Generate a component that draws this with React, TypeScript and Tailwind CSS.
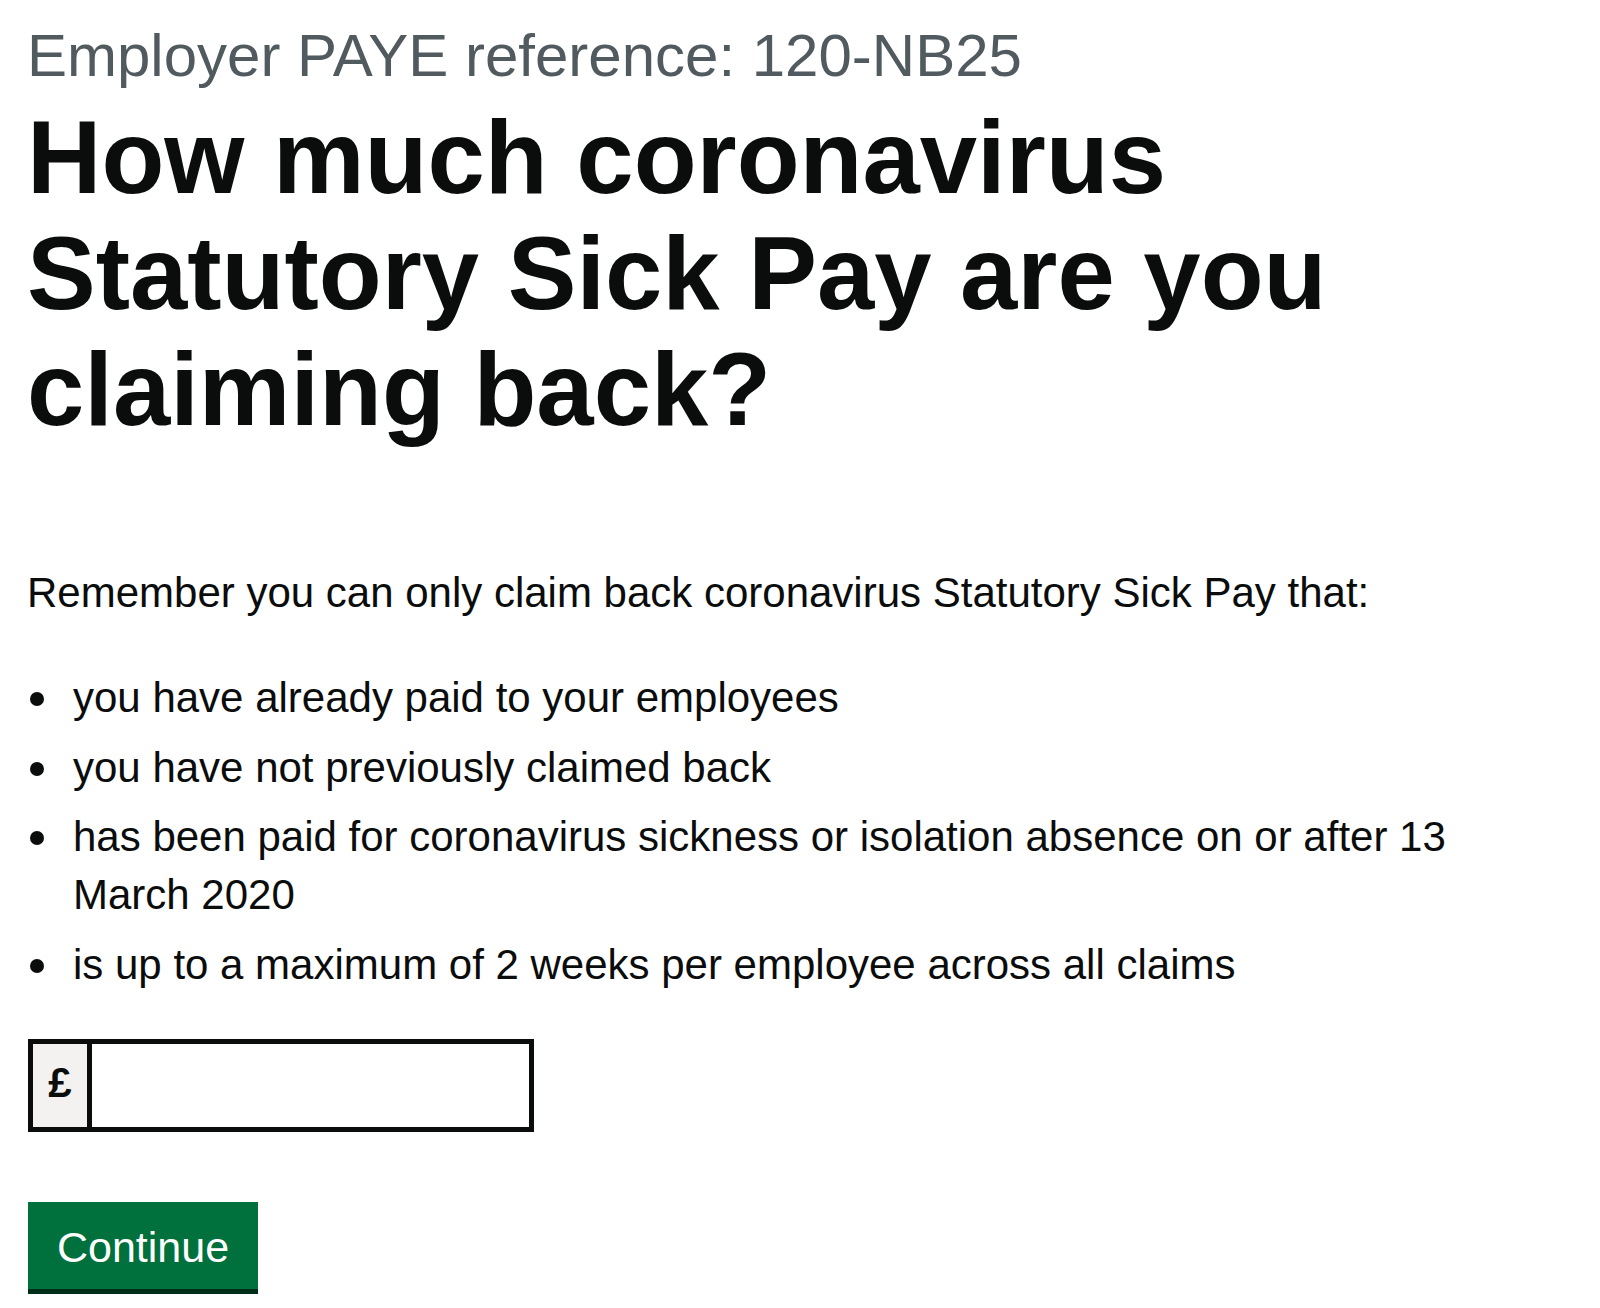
import React from "react";

const items: React.ReactNode[] = [
  "you have already paid to your employees",
  "you have not previously claimed back",
  <>
    has been paid for coronavirus sickness or isolation absence on or after 13
    <br />
    March 2020
  </>,
  "is up to a maximum of 2 weeks per employee across all claims",
];

export default function App() {
  return (
    <div className="min-h-screen bg-white px-[27px] pt-[21px] font-['Liberation_Sans',Arial,sans-serif] text-[#0b0c0c]">
      <span className="mb-[9px] block text-[60px] leading-[70px] text-[#505a5f]">
        Employer PAYE reference: 120-NB25
      </span>
      <h1 className="mb-[116px] text-[103px] font-bold leading-[116px]">
        How much coronavirus
        <br />
        Statutory Sick Pay are you
        <br />
        claiming back?
      </h1>
      <p className="mb-[47px] text-[42px] leading-[58px]">
        Remember you can only claim back coronavirus Statutory Sick Pay that:
      </p>
      <ul className="mb-[45.5px] flex flex-col gap-[11.5px] text-[42px] leading-[58px]">
        {items.map((it, i) => (
          <li key={i} className="flex">
            <span className="w-[46px] shrink-0">
              <span className="ml-[3px] mt-[23px] block h-[14px] w-[14px] rounded-full bg-[#0b0c0c]" />
            </span>
            <span className="whitespace-nowrap">{it}</span>
          </li>
        ))}
      </ul>
      <div className="ml-[1px] flex h-[93px]">
        <div className="flex h-[93px] w-[59px] items-center justify-center border-[5px] border-r-0 border-[#0b0c0c] bg-[#f3f2f1] pb-[6px] text-[42px] font-bold">
          £
        </div>
        <input
          type="text"
          aria-label="Amount"
          className="h-[93px] w-[447px] border-[5px] border-[#0b0c0c] bg-white px-[10px] text-[42px] outline-none"
        />
      </div>
      <button
        type="button"
        className="ml-[1px] mt-[70px] flex h-[87px] w-[230px] items-center justify-center bg-[#00703c] pt-[4px] text-[43px] text-white shadow-[0_5px_0_#002d18]"
      >
        Continue
      </button>
    </div>
  );
}
